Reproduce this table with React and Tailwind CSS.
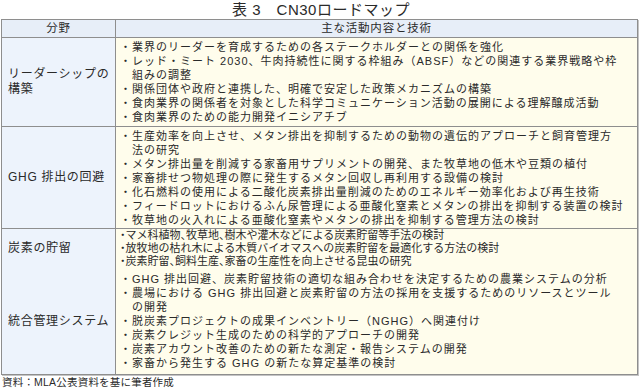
import React from "react";

const rows = [
  {
    label: ["リーダーシップの", "構築"],
    h: "h-[89px]",
    lh: "leading-[14px]",
    lines: [
      ["b", "・業界のリーダーを育成するための各ステークホルダーとの関係を強化"],
      ["b", "・レッド・ミート 2030、牛肉持続性に関する枠組み（ABSF）などの関連する業界戦略や枠"],
      ["c", "組みの調整"],
      ["b", "・関係団体や政府と連携した、明確で安定した政策メカニズムの構築"],
      ["b", "・食肉業界の関係者を対象とした科学コミュニケーション活動の展開による理解醸成活動"],
      ["b", "・食肉業界のための能力開発イニシアチブ"],
    ],
  },
  {
    label: ["GHG 排出の回避"],
    h: "h-[102px]",
    lh: "leading-[14px]",
    lines: [
      ["b", "・生産効率を向上させ、メタン排出を抑制するための動物の遺伝的アプローチと飼育管理方"],
      ["c", "法の研究"],
      ["b", "・メタン排出量を削減する家畜用サプリメントの開発、また牧草地の低木や豆類の植付"],
      ["b", "・家畜排せつ物処理の際に発生するメタン回収し再利用する設備の検討"],
      ["b", "・化石燃料の使用による二酸化炭素排出量削減のためのエネルギー効率化および再生技術"],
      ["b", "・フィードロットにおけるふん尿管理による亜酸化窒素とメタンの排出を抑制する装置の検討"],
      ["b", "・牧草地の火入れによる亜酸化窒素やメタンの排出を抑制する管理方法の検討"],
    ],
  },
  {
    label: ["炭素の貯留"],
    h: "h-[39px]",
    lh: "leading-[13px]",
    tight: true,
    lines: [
      ["b", "・マメ科植物、牧草地、樹木や灌木などによる炭素貯留等手法の検討"],
      ["b", "・放牧地の枯れ木による木質バイオマスへの炭素貯留を最適化する方法の検討"],
      ["b", "・炭素貯留、飼料生産、家畜の生産性を向上させる昆虫の研究"],
    ],
  },
  {
    label: ["統合管理システム"],
    h: "h-[107px]",
    lh: "leading-[14px]",
    lines: [
      ["b", "・GHG 排出回避、炭素貯留技術の適切な組み合わせを決定するための農業システムの分析"],
      ["b", "・農場における GHG 排出回避と炭素貯留の方法の採用を支援するためのリソースとツール"],
      ["c", "の開発"],
      ["b", "・脱炭素プロジェクトの成果インベントリー（NGHG）へ関連付け"],
      ["b", "・炭素クレジット生成のための科学的アプローチの開発"],
      ["b", "・炭素アカウント改善のための新たな測定・報告システムの開発"],
      ["b", "・家畜から発生する GHG の新たな算定基準の検討"],
    ],
  },
];

export default function App() {
  return (
    <div className="w-[640px] h-[389px] bg-white text-[#2a2a2a] font-['Liberation_Sans','Noto_Sans_CJK_JP',sans-serif] overflow-hidden">
      <div className="h-[19px] flex items-center justify-center text-[15px] leading-none tracking-[0.5px] pl-[2px]">
        表 3　CN30ロードマップ
      </div>
      <div className="ml-[1px] w-[637px] border border-[#8e8e8e] shadow-[1px_1px_0_#c4c4c4]">
        <div className="grid grid-cols-[114px_1fr] h-[17px] bg-[#e7eef8] text-[11.5px] tracking-[0.8px]">
          <div className="flex items-center justify-center border-r border-[#8e8e8e]">分野</div>
          <div className="flex items-center justify-center">主な活動内容と技術</div>
        </div>
        {rows.map((r, i) => (
          <div key={i} className={`grid grid-cols-[114px_1fr] border-t border-[#8e8e8e] ${r.h}`}>
            <div className="bg-[#edf3fc] border-r border-[#8e8e8e] flex flex-col justify-center pl-[6px] text-[12px] leading-[15px] tracking-[0.7px]">
              {r.label.map((l, j) => (
                <div key={j} className="whitespace-nowrap">{l}</div>
              ))}
            </div>
            <div
              className={`bg-[#fffdec] flex flex-col justify-center pl-[4px] text-[11px] ${r.lh} ${
                r.tight ? "tracking-[0px] [font-feature-settings:'halt']" : "tracking-[1px]"
              }`}
            >
              {r.lines.map(([k, t], j) => (
                <div key={j} className={`whitespace-nowrap ${k === "c" ? "pl-[12px]" : ""}`}>
                  {t}
                </div>
              ))}
            </div>
          </div>
        ))}
      </div>
      <div className="pl-[2px] pt-[1px] text-[10.5px] leading-[13px] tracking-[0.2px]">
        資料：MLA公表資料を基に筆者作成
      </div>
    </div>
  );
}
